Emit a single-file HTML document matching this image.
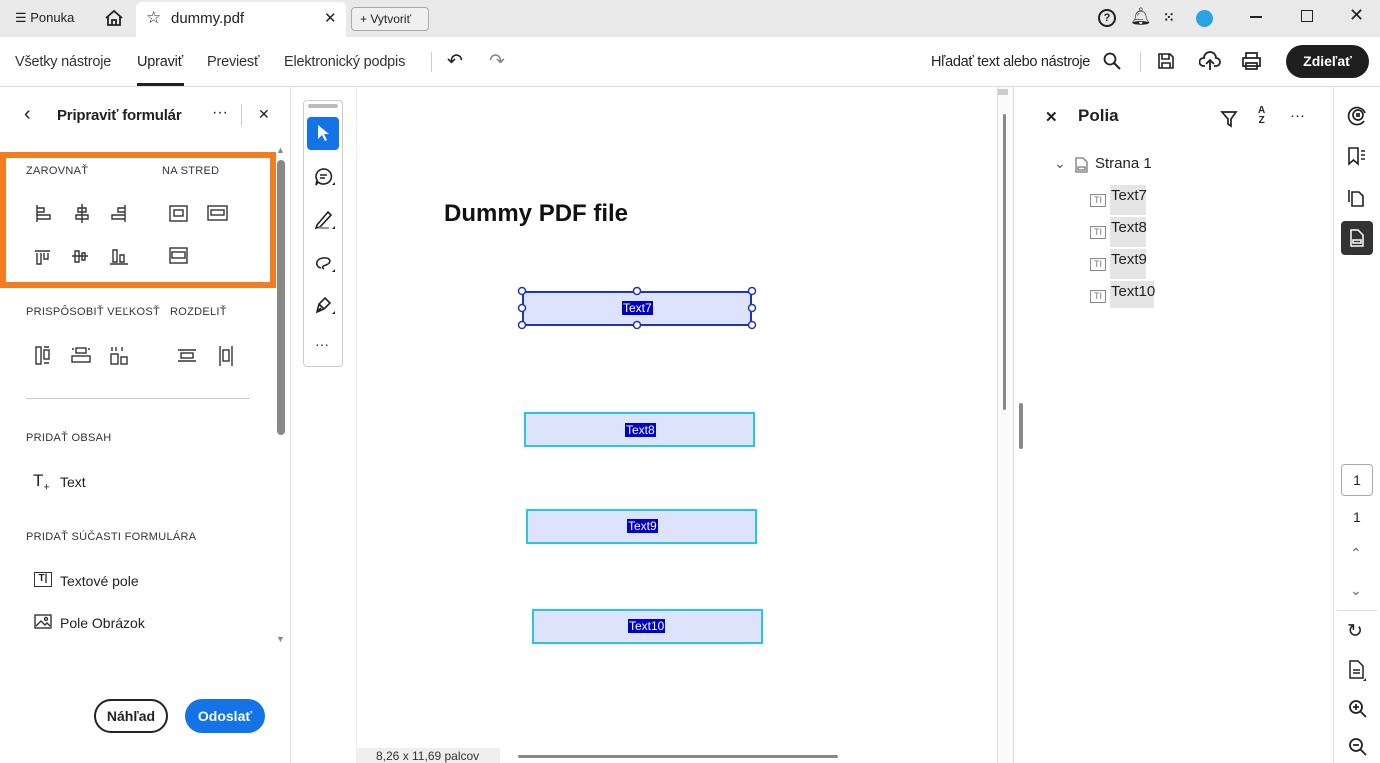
<!DOCTYPE html>
<html><head><meta charset="utf-8"><style>
*{box-sizing:border-box;margin:0;padding:0}
body{width:1380px;height:763px;overflow:hidden;background:#fff;font-family:"Liberation Sans",sans-serif;color:#222;position:relative}
.a{position:absolute}
.t{font-size:14px}
.cap{font-size:11px;color:#333;letter-spacing:.3px}
.fld{position:absolute;background:#dde3fb;border:2px solid #2ac6e0}
.lbl{position:absolute;background:#0000c8;color:#fff;font-size:12px;padding:0 1px;line-height:14px}
svg{position:absolute}
</style></head><body>
<!-- top bar -->
<div class="a" style="left:0;top:0;width:1380px;height:37px;background:#e9e9e9"></div>
<div class="a" style="left:136px;top:2px;width:210px;height:35px;background:#fff;border-radius:6px 6px 0 0"></div>
<div class="a t" style="left:15px;top:10px;font-size:13px">☰ Ponuka</div>
<svg style="left:104px;top:9px" width="20" height="18" viewBox="0 0 20 18"><path d="M2 9 L10 2 L18 9 M4 7 V16 H16 V7 M8 16 V11 H12 V16" fill="none" stroke="#222" stroke-width="1.8"/></svg>
<div class="a" style="left:146px;top:8px;font-size:17px">☆</div>
<div class="a t" style="left:171px;top:10px;font-size:15px">dummy.pdf</div>
<div class="a" style="left:324px;top:9px;font-size:15px">✕</div>
<div class="a" style="left:351px;top:7px;width:78px;height:24px;border:1px solid #aaa;border-radius:4px;background:#f0f0f0;font-size:12px;padding:4px 8px">+ Vytvoriť</div>
<div class="a" style="left:1098px;top:9px;width:18px;height:18px;border:2px solid #222;border-radius:50%;font-size:11px;font-weight:bold;text-align:center;line-height:14px">?</div>
<div class="a" style="left:1130px;top:7px;font-size:17px">🔔︎</div>
<div class="a" style="left:1163px;top:9px;font-size:14px;font-weight:bold">⁙</div>
<div class="a" style="left:1196px;top:10px;width:17px;height:17px;border-radius:50%;background:#2aa3e0"></div>
<div class="a" style="left:1250px;top:16px;width:12px;height:2px;background:#222"></div>
<div class="a" style="left:1301px;top:10px;width:12px;height:12px;border:1.5px solid #222"></div>
<div class="a" style="left:1349px;top:5px;font-size:18px">✕</div>
<!-- menu bar -->
<div class="a" style="left:0;top:86px;width:1380px;height:1px;background:#ddd"></div>
<div class="a" style="left:15px;top:54px;font-size:14.5px;color:#333;letter-spacing:-.2px">Všetky nástroje</div>
<div class="a" style="left:137px;top:54px;font-size:14.5px;letter-spacing:-.2px">Upraviť</div>
<div class="a" style="left:137px;top:83px;width:47px;height:3px;background:#222"></div>
<div class="a" style="left:207px;top:54px;font-size:14.5px;color:#333;letter-spacing:-.2px">Previesť</div>
<div class="a" style="left:284px;top:54px;font-size:14.5px;color:#333;letter-spacing:-.2px">Elektronický podpis</div>
<div class="a" style="left:431px;top:52px;width:1px;height:20px;background:#ccc"></div>
<div class="a" style="left:447px;top:50px;font-size:19px">↶</div>
<div class="a" style="left:489px;top:50px;font-size:19px;color:#888">↷</div>
<div class="a" style="left:931px;top:54px;font-size:14.5px;letter-spacing:-.3px">Hľadať text alebo nástroje</div>
<svg style="left:1103px;top:52px" width="18" height="18"><circle cx="7" cy="7" r="5.5" fill="none" stroke="#222" stroke-width="1.8"/><path d="M11 11 L17 17" stroke="#222" stroke-width="2"/></svg>
<div class="a" style="left:1140px;top:52px;width:1px;height:20px;background:#ccc"></div>
<svg style="left:1157px;top:52px" width="18" height="18"><path d="M2 2 H13 L16 5 V16 H2 Z M5 2 V7 H12 V2 M5 16 V11 H13 V16" fill="none" stroke="#222" stroke-width="1.6"/></svg>
<svg style="left:1199px;top:51px" width="22" height="20"><path d="M6 15 H4 A4 4 0 0 1 5 7 A6 6 0 0 1 17 7 A4 4 0 0 1 17 15 H15 M11 19 V9 M7 13 L11 9 L15 13" fill="none" stroke="#222" stroke-width="1.8"/></svg>
<svg style="left:1241px;top:51px" width="21" height="20"><path d="M5 7 V2 H16 V7 M2 7 H19 V15 H2 Z M5 12 H16 V18 H5 Z" fill="#fff" stroke="#222" stroke-width="1.7"/></svg>
<div class="a" style="left:1286px;top:45px;width:83px;height:33px;border-radius:17px;background:#1e1e1e;color:#fff;font-size:14px;font-weight:bold;text-align:center;line-height:33px">Zdieľať</div>
<!-- left panel -->
<div class="a" style="left:290px;top:87px;width:1px;height:676px;background:#ddd"></div>
<div class="a" style="left:24px;top:103px;font-size:20px">‹</div>
<div class="a" style="left:57px;top:107px;font-size:15px;font-weight:bold;letter-spacing:-.2px">Pripraviť formulár</div>
<div class="a" style="left:212px;top:104px;font-size:16px">···</div>
<div class="a" style="left:241px;top:104px;width:1px;height:22px;background:#ccc"></div>
<div class="a" style="left:258px;top:106px;font-size:14px">✕</div>
<div class="a" style="left:0;top:152px;width:276px;height:136px;border:6px solid #f47c20"></div>
<div class="a cap" style="left:26px;top:165px">ZAROVNAŤ</div>
<div class="a cap" style="left:162px;top:165px">NA STRED</div>
<svg style="left:30px;top:200px" width="210" height="70" fill="none" stroke="#333" stroke-width="1.4">
<path d="M7 5 V22 M7 8 H14 V12 H7 M7 15 H20 V19 H7"/>
<path d="M52 4 V23 M48 8 H56 V12 H48 Z M46 15 H58 V19 H46 Z"/>
<path d="M95 5 V22 M95 8 H88 V12 H95 M95 15 H82 V19 H95"/>
<rect x="140" y="6" width="17" height="15"/><rect x="144" y="10" width="9" height="6"/>
<rect x="178" y="6" width="19" height="14"/><rect x="181" y="10" width="13" height="5"/>
<path d="M5 51 H20 M7 53 V64 H11 V53 M14 53 V59 H18 V53"/>
<path d="M42 56 H58 M45 51 V62 H49 V51 Z M52 53 V60 H55 V53 Z"/>
<path d="M80 64 H98 M83 50 V62 H87 V50 Z M90 55 V62 H94 V55 Z"/>
<rect x="140" y="48" width="17" height="15"/><rect x="142" y="52" width="13" height="6"/>
</svg>
<div class="a cap" style="left:26px;top:306px">PRISPÔSOBIŤ VEĽKOSŤ</div>
<div class="a cap" style="left:170px;top:306px">ROZDELIŤ</div>
<svg style="left:30px;top:342px" width="210" height="28" fill="none" stroke="#333" stroke-width="1.4">
<rect x="6" y="5" width="5" height="17"/><rect x="14" y="8" width="5" height="9"/><path d="M14 5 H19 M14 21 H19"/>
<rect x="42" y="14" width="18" height="6"/><rect x="46" y="6" width="10" height="5"/><path d="M42 7 H44 M58 7 H60"/>
<rect x="81" y="12" width="7" height="10"/><rect x="91" y="15" width="6" height="7"/><path d="M82 5 V9 M86 5 V9 M92 5 V9"/>
<path d="M148 8 H166 M148 19 H166"/><rect x="151" y="11" width="12" height="5"/>
<path d="M190 4 V24 M202 4 V24"/><rect x="193" y="8" width="6" height="11"/>
</svg>
<div class="a" style="left:26px;top:398px;width:224px;height:1px;background:#ccc"></div>
<div class="a cap" style="left:26px;top:432px">PRIDAŤ OBSAH</div>
<div class="a" style="left:33px;top:471px;font-size:17px">T<sub style="font-size:11px">+</sub></div>
<div class="a t" style="left:60px;top:474px">Text</div>
<div class="a cap" style="left:26px;top:531px">PRIDAŤ SÚČASTI FORMULÁRA</div>
<div class="a" style="left:34px;top:572px;width:18px;height:15px;border:1.5px solid #333;font-size:10px;font-weight:bold;text-align:center;line-height:12px">T|</div>
<div class="a t" style="left:60px;top:573px">Textové pole</div>
<svg style="left:34px;top:614px" width="18" height="16" fill="none" stroke="#333" stroke-width="1.4"><rect x="1" y="1" width="16" height="13"/><path d="M2 12 L7 7 L11 11 L13 9 L16 12"/><circle cx="12" cy="5" r="1.5"/></svg>
<div class="a t" style="left:60px;top:615px">Pole Obrázok</div>
<!-- scrollbar left -->
<div class="a" style="left:276px;top:145px;font-size:9px;color:#888">▲</div>
<div class="a" style="left:277px;top:160px;width:8px;height:275px;border-radius:4px;background:#888"></div>
<div class="a" style="left:276px;top:634px;font-size:9px;color:#888">▼</div>
<div class="a" style="left:94px;top:699px;width:74px;height:34px;border:2px solid #222;border-radius:17px;font-size:14px;font-weight:bold;text-align:center;line-height:30px">Náhľad</div>
<div class="a" style="left:185px;top:699px;width:80px;height:34px;background:#1473e6;border-radius:17px;color:#fff;font-size:14px;font-weight:bold;text-align:center;line-height:34px">Odoslať</div>
<!-- tool strip -->
<div class="a" style="left:303px;top:100px;width:40px;height:267px;border:1px solid #ccc;border-radius:4px;background:#fff"></div>
<div class="a" style="left:308px;top:104px;width:30px;height:4px;background:#bbb;border-radius:2px"></div>
<div class="a" style="left:307px;top:117px;width:32px;height:33px;background:#1473e6;border-radius:4px"></div>
<svg style="left:316px;top:124px" width="14" height="18"><path d="M2 1 V15 L6 11 L9 17 L11 16 L8 10 H13 Z" fill="#fff"/></svg>
<svg style="left:313px;top:166px" width="24" height="24" fill="none" stroke="#222" stroke-width="1.6"><path d="M10 3 A8 7.5 0 1 1 5 16 L3 19 L4 14 A8 7.5 0 0 1 10 3 Z M7 9 H14 M7 12 H12"/><path d="M19 19 L22 19 L22 16 Z" fill="#222" stroke="none"/></svg>
<svg style="left:313px;top:208px" width="24" height="24" fill="none" stroke="#222" stroke-width="1.6"><path d="M4 17 L15 4 L18 7 L7 19 L3 20 Z"/><path d="M6 20 H16" stroke="#999" stroke-width="2"/><path d="M19 21 L22 21 L22 18 Z" fill="#222" stroke="none"/></svg>
<svg style="left:313px;top:252px" width="24" height="24" fill="none" stroke="#222" stroke-width="1.6"><path d="M8 16 C2 15 2 7 10 6 C18 5 19 11 13 13 C10 14 8 15 11 17"/><path d="M19 20 L22 20 L22 17 Z" fill="#222" stroke="none"/></svg>
<svg style="left:313px;top:294px" width="24" height="24" fill="none" stroke="#222" stroke-width="1.6"><path d="M4 18 L6 10 L12 4 L17 9 L11 15 Z M6 10 L11 15 M4 18 L8 14"/><path d="M19 20 L22 20 L22 17 Z" fill="#222" stroke="none"/></svg>
<div class="a" style="left:315px;top:336px;font-size:14px">···</div>
<!-- document -->
<div class="a" style="left:356px;top:87px;width:1px;height:676px;background:#eee"></div>
<div class="a" style="left:444px;top:200px;font-size:24px;font-weight:bold;color:#111">Dummy PDF file</div>
<div class="fld" style="left:522px;top:291px;width:230px;height:35px;border-color:#2233bb"></div>
<svg style="left:517px;top:286px" width="240" height="45" fill="#fff" stroke="#2233bb" stroke-width="1.5"><circle cx="5" cy="5" r="3.5"/><circle cx="120" cy="5" r="3.5"/><circle cx="235" cy="5" r="3.5"/><circle cx="5" cy="22" r="3.5"/><circle cx="235" cy="22" r="3.5"/><circle cx="5" cy="39" r="3.5"/><circle cx="120" cy="39" r="3.5"/><circle cx="235" cy="39" r="3.5"/></svg>
<div class="lbl" style="left:622px;top:301px">Text7</div>
<div class="fld" style="left:524px;top:412px;width:231px;height:35px"></div>
<div class="lbl" style="left:625px;top:423px">Text8</div>
<div class="fld" style="left:526px;top:509px;width:231px;height:35px"></div>
<div class="lbl" style="left:627px;top:519px">Text9</div>
<div class="fld" style="left:532px;top:609px;width:231px;height:35px"></div>
<div class="lbl" style="left:628px;top:619px">Text10</div>
<div class="a" style="left:356px;top:748px;width:641px;height:15px;background:#eee"></div>
<div class="a" style="left:376px;top:749px;font-size:12px;color:#333">8,26 x 11,69 palcov</div>
<div class="a" style="left:500px;top:748px;width:497px;height:15px;background:#fff"></div>
<div class="a" style="left:518px;top:755px;width:320px;height:3px;background:#888;border-radius:2px"></div>
<div class="a" style="left:997px;top:87px;width:16px;height:676px;background:#fafafa;border-left:1px solid #ddd"></div>
<div class="a" style="left:998px;top:89px;width:10px;height:6px;background:#ccc"></div>
<div class="a" style="left:1003px;top:114px;width:3px;height:296px;background:#888;border-radius:2px"></div>
<div class="a" style="left:1013px;top:87px;width:1px;height:676px;background:#ddd"></div>
<div class="a" style="left:1019px;top:403px;width:4px;height:46px;background:#888;border-radius:2px"></div>
<!-- right panel -->
<div class="a" style="left:1045px;top:108px;font-size:15px;font-weight:bold">✕</div>
<div class="a" style="left:1078px;top:106px;font-size:17px;font-weight:bold">Polia</div>
<svg style="left:1220px;top:110px" width="18" height="18"><path d="M2 2 H16 L11 9 V16 L8 14 V9 Z" fill="none" stroke="#222" stroke-width="1.7"/></svg>
<div class="a" style="left:1258px;top:106px;font-size:10px;font-weight:bold;line-height:10px;text-align:center">A<br>Z</div>
<div class="a" style="left:1290px;top:107px;font-size:15px">···</div>
<div class="a" style="left:1054px;top:155px;font-size:14px;color:#555">⌄</div>
<svg style="left:1075px;top:157px" width="13" height="16" fill="none" stroke="#777" stroke-width="1.3"><path d="M1 1 H8 L12 5 V15 H1 Z M3 10 H10 V13 H3 Z"/></svg>
<div class="a" style="left:1095px;top:155px;font-size:15px">Strana 1</div>
<div class="a" style="left:1110px;top:185px;width:36px;height:30px;background:#e5e5e5"></div>
<div class="a" style="left:1110px;top:217px;width:36px;height:30px;background:#e5e5e5"></div>
<div class="a" style="left:1110px;top:249px;width:36px;height:30px;background:#e5e5e5"></div>
<div class="a" style="left:1110px;top:281px;width:44px;height:27px;background:#e5e5e5"></div>
<div class="a" style="left:1111px;top:187px;font-size:15px">Text7</div>
<div class="a" style="left:1111px;top:219px;font-size:15px">Text8</div>
<div class="a" style="left:1111px;top:251px;font-size:15px">Text9</div>
<div class="a" style="left:1111px;top:283px;font-size:15px">Text10</div>
<div class="a" style="left:1090px;top:194px;width:16px;height:13px;border:1.5px solid #888;font-size:9px;color:#777;text-align:center;line-height:10px">TI</div>
<div class="a" style="left:1090px;top:226px;width:16px;height:13px;border:1.5px solid #888;font-size:9px;color:#777;text-align:center;line-height:10px">TI</div>
<div class="a" style="left:1090px;top:258px;width:16px;height:13px;border:1.5px solid #888;font-size:9px;color:#777;text-align:center;line-height:10px">TI</div>
<div class="a" style="left:1090px;top:290px;width:16px;height:13px;border:1.5px solid #888;font-size:9px;color:#777;text-align:center;line-height:10px">TI</div>
<!-- right rail -->
<div class="a" style="left:1333px;top:87px;width:1px;height:676px;background:#ddd"></div>
<svg style="left:1346px;top:104px" width="22" height="22" fill="none" stroke="#222" stroke-width="1.7"><path d="M18 17 A8.5 8.5 0 1 1 19 9"/><circle cx="12" cy="11" r="5"/><path d="M10 10 H14 M10 12 H14"/></svg>
<svg style="left:1347px;top:146px" width="20" height="20" fill="none" stroke="#222" stroke-width="1.6"><path d="M2 2 H11 V18 L6.5 14 L2 18 Z M14 5 H18 M14 9 H18 M14 13 H18"/></svg>
<svg style="left:1347px;top:187px" width="18" height="20" fill="none" stroke="#222" stroke-width="1.6"><path d="M2 3 V15 M5 5 H12 L16 9 V19 H5 Z"/></svg>
<div class="a" style="left:1341px;top:221px;width:32px;height:34px;background:#333;border-radius:4px"></div>
<svg style="left:1350px;top:229px" width="14" height="18" fill="none" stroke="#fff" stroke-width="1.5"><path d="M1 1 H8 L13 6 V17 H1 Z M3 11 H11 V14 H3 Z"/></svg>
<div class="a" style="left:1341px;top:464px;width:32px;height:32px;border:1px solid #aaa;border-radius:4px;font-size:14px;text-align:center;line-height:30px">1</div>
<div class="a" style="left:1353px;top:509px;font-size:14px">1</div>
<div class="a" style="left:1350px;top:545px;font-size:14px;color:#666">⌃</div>
<div class="a" style="left:1350px;top:582px;font-size:14px;color:#666">⌄</div>
<div class="a" style="left:1337px;top:610px;width:40px;height:1px;background:#ddd"></div>
<div class="a" style="left:1347px;top:620px;font-size:19px">↻</div>
<svg style="left:1349px;top:660px" width="18" height="22" fill="none" stroke="#222" stroke-width="1.5"><path d="M1 1 H9 L14 6 V18 H1 Z M4 10 H11 M4 13 H11"/><path d="M14 21 L17 21 L17 18 Z" fill="#222" stroke="none"/></svg>
<svg style="left:1348px;top:699px" width="20" height="20" fill="none" stroke="#222" stroke-width="1.8"><circle cx="8" cy="8" r="6"/><path d="M12 12 L18 18 M5 8 H11 M8 5 V11"/></svg>
<svg style="left:1348px;top:737px" width="20" height="20" fill="none" stroke="#222" stroke-width="1.8"><circle cx="8" cy="8" r="6"/><path d="M12 12 L18 18 M5 8 H11"/></svg>
</body></html>
